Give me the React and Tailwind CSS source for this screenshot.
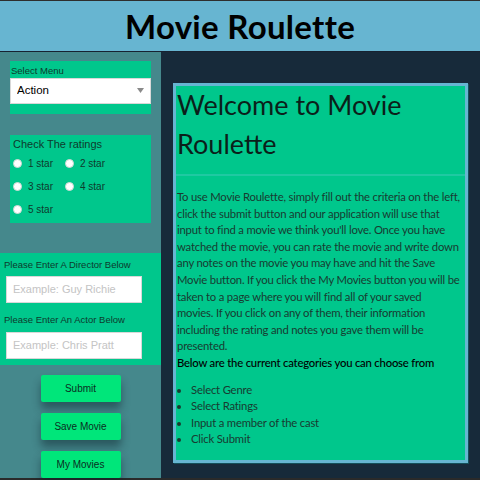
import React, { useState } from 'react';

const genres = ['Action', 'Comedy', 'Drama', 'Horror', 'Romance', 'Sci-Fi'];
const ratings = ['1 star', '2 star', '3 star', '4 star', '5 star'];
const steps = ['Select Genre', 'Select Ratings', 'Input a member of the cast', 'Click Submit'];

// intro text, broken the same way as the original layout
const introLines = [
    'To use Movie Roulette, simply fill out the criteria on the left,',
    'click the submit button and our application will use that',
    "input to find a movie we think you'll love. Once you have",
    'watched the movie, you can rate the movie and write down',
    'any notes on the movie you may have and hit the Save',
    'Movie button. If you click the My Movies button you will be',
    'taken to a page where you will find all of your saved',
    'movies. If you click on any of them, their information',
    'including the rating and notes you gave them will be',
    'presented.',
];

const SideButton = ({ label }) => (
    <button className="w-[80px] h-[27px] bg-[#00e67a] rounded-[2px] text-[10px] text-[#0b2e22] shadow-[0_7px_9px_rgba(10,30,40,0.45)]">
        {label}
    </button>
);

const App = () => {
    const [genre, setGenre] = useState('Action');
    const [rating, setRating] = useState(null);
    const [director, setDirector] = useState('');
    const [actor, setActor] = useState('');

    return (
        <div className="w-[480px] h-[480px] overflow-hidden bg-[#2a2a2a] flex flex-col font-['Liberation_Sans',Arial,sans-serif]">
            <header className="h-[52px] shrink-0 bg-[#67b5d1] border-t border-[#2e2e2e] border-b border-b-[#172231] flex items-center justify-center">
                <h1 className="text-[33px] font-bold text-black font-['Lato',sans-serif] tracking-[0.3px] pt-[2px]">Movie Roulette</h1>
            </header>

            <div className="flex h-[426px]">
                {/* left column with the search criteria */}
                <aside className="w-[161px] shrink-0 bg-[#45888c] flex flex-col pt-[9px]">
                    <div className="mx-[10px] bg-[#00c78c] pt-[3px] pb-[10px]">
                        <label className="block text-[9.5px] leading-[13px] text-[#0e3a2c] px-[1px]">Select Menu</label>
                        <div className="relative">
                            <select
                                value={genre}
                                onChange={e => setGenre(e.target.value)}
                                className="appearance-none w-full h-[26px] bg-white border border-[#d8d8d8] pl-[6px] text-[11.5px] text-black outline-none"
                            >
                                {genres.map(g => <option key={g}>{g}</option>)}
                            </select>
                            <svg className="absolute right-[7px] top-[11px]" width="7" height="5" viewBox="0 0 7 5">
                                <path d="M0 0 L7 0 L3.5 5 Z" fill="#8a8a8a" />
                            </svg>
                        </div>
                    </div>

                    <div className="mx-[10px] mt-[21px] h-[88px] bg-[#00c78c] px-[3px] pt-[3px]">
                        <p className="text-[11px] leading-[13px] text-[#0e3a2c]">Check The ratings</p>
                        <div className="grid grid-cols-[52px_52px] gap-y-[10px] mt-[6px]">
                            {ratings.map(r => (
                                <label key={r} className="flex items-center gap-[6px] h-[13px] text-[10px] text-[#0e3a2c]">
                                    <input
                                        type="radio"
                                        name="rating"
                                        checked={rating === r}
                                        onChange={() => setRating(r)}
                                        className="appearance-none w-[9px] h-[9px] rounded-full bg-white border border-[#cfd8d4] checked:bg-[#1a73e8]"
                                    />
                                    {r}
                                </label>
                            ))}
                        </div>
                    </div>

                    <div className="mt-[30px] h-[112px] bg-[#00c78c] px-[4px] pt-[6px]">
                        <label className="block text-[9.5px] leading-[12px] text-[#0e3a2c]">Please Enter A Director Below</label>
                        <input
                            value={director}
                            onChange={e => setDirector(e.target.value)}
                            placeholder="Example: Guy Richie"
                            className="mt-[5px] ml-[2px] w-[136px] h-[27px] bg-white border border-[#d8d8d8] px-[6px] text-[11px] placeholder:text-[#c4c4c4] outline-none"
                        />
                        <label className="block mt-[11px] text-[9.5px] leading-[12px] text-[#0e3a2c]">Please Enter An Actor Below</label>
                        <input
                            value={actor}
                            onChange={e => setActor(e.target.value)}
                            placeholder="Example: Chris Pratt"
                            className="mt-[6px] ml-[2px] w-[136px] h-[27px] bg-white border border-[#d8d8d8] px-[6px] text-[11px] placeholder:text-[#c4c4c4] outline-none"
                        />
                    </div>

                    <div className="flex flex-col items-center gap-[11px] mt-[10px]">
                        <SideButton label="Submit" />
                        <SideButton label="Save Movie" />
                        <SideButton label="My Movies" />
                    </div>
                </aside>

                {/* right column with the instructions */}
                <main className="flex-1 bg-[#172a3a] pt-[31px] pl-[12px]">
                    <div className="w-[295px] h-[380px] bg-[#00c78c] border-[3px] border-[#67b5d1] shadow-[1px_1px_0_#14505a] pl-[1px] font-['Lato',sans-serif]">
                        <h2 className="text-[27px] leading-[38.5px] text-[#0b1f1a]">Welcome to Movie Roulette</h2>
                        <hr className="mt-[11px] -ml-[1px] border-0 h-[2px] bg-[#1fc9a2]" />
                        <div className="text-[11.3px] leading-[16.6px] tracking-[-0.2px] whitespace-nowrap">
                            <p className="mt-[13px] text-[#183b31]">
                                {introLines.map((line, i) => (
                                    <React.Fragment key={i}>
                                        {line}
                                        {i < introLines.length - 1 && <br />}
                                    </React.Fragment>
                                ))}
                            </p>
                            <p className="text-black font-medium">Below are the current categories you can choose from</p>
                            <ul className="mt-[10px] pl-[14px] list-disc text-[#183b31]">
                                {steps.map(s => <li key={s}>{s}</li>)}
                            </ul>
                        </div>
                    </div>
                </main>
            </div>
        </div>
    );
};

export default App;
